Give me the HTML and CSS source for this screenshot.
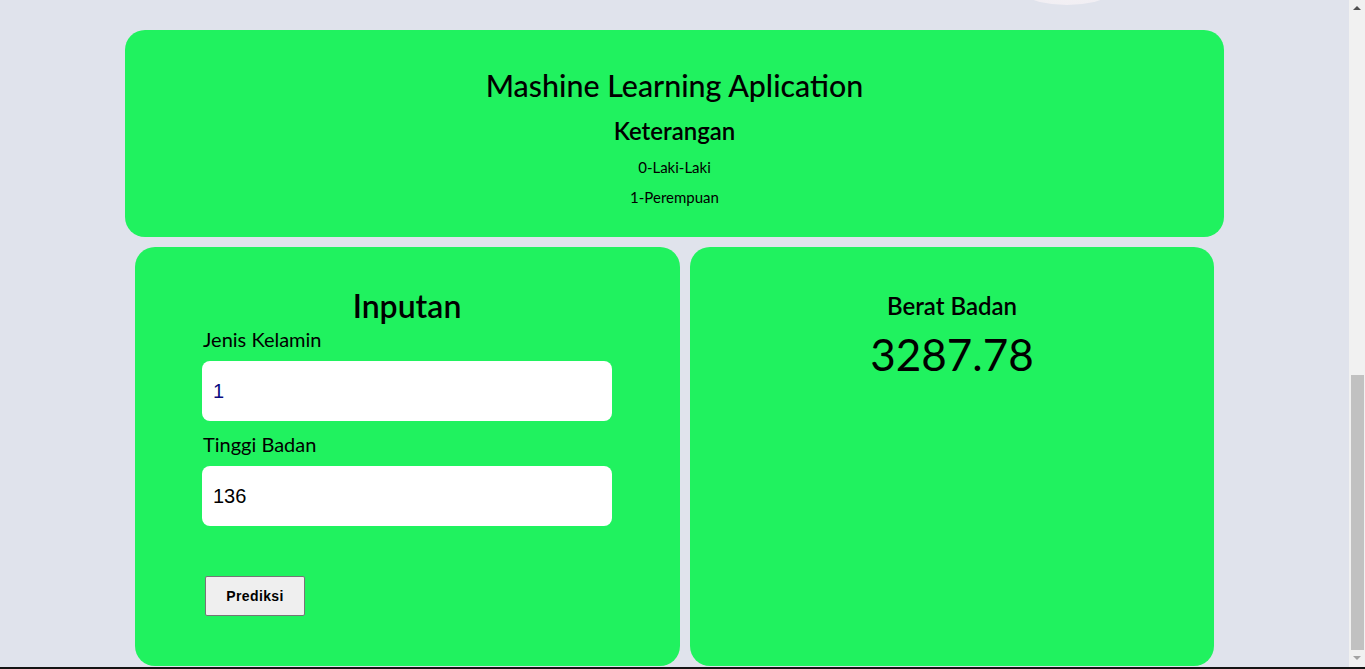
FILE: index.html
```html
<!DOCTYPE html>
<html lang="id">
<head>
<meta charset="utf-8">
<title>Mashine Learning Aplication</title>
<link rel="stylesheet" href="styles.css">
</head>
<body>
<div class="screen">
  <main class="page">
    <div class="blob"></div>
    <section class="card header">
      <h1 class="title">Mashine Learning Aplication</h1>
      <h2 class="subtitle">Keterangan</h2>
      <p class="note">0-Laki-Laki</p>
      <p class="note">1-Perempuan</p>
    </section>
    <div class="row">
      <section class="card form-card">
        <form class="form">
          <h2 class="form-title">Inputan</h2>
          <label class="label">Jenis Kelamin</label>
          <input class="field field-blue" type="text" value="1">
          <label class="label">Tinggi Badan</label>
          <input class="field" type="text" value="136">
          <button class="btn" type="button">Prediksi</button>
        </form>
      </section>
      <section class="card result-card">
        <h2 class="result-title">Berat Badan</h2>
        <div class="result-value">3287.78</div>
      </section>
    </div>
  </main>
  <aside class="scrollbar">
    <div class="arrow arrow-up"></div>
    <div class="track"><div class="thumb"></div></div>
    <div class="arrow arrow-down"></div>
  </aside>
</div>
<div class="taskbar"></div>
</body>
</html>
```
FILE: styles.css
```css
* { box-sizing: border-box; }
html, body { margin: 0; padding: 0; height: 669px; overflow: hidden; }
body {
  font-family: "Lato", "Noto Sans", sans-serif;
  background: #e0e3ec;
  color: #000;
}
.screen { display: flex; height: 667px; }
.page {
  position: relative;
  width: 1349px;
  flex: 0 0 1349px;
  padding-top: 30px;
}
.blob {
  position: absolute;
  left: 1000px;
  top: -70px;
  width: 134px;
  height: 75px;
  border-radius: 50%;
  background: radial-gradient(ellipse at 50% 60%, #f6f4f6 0%, #efecf2 70%, #e6e6ee 100%);
}
.card {
  background: #20f25f;
  border-radius: 20px;
}
.header {
  margin: 0 125px;
  height: 207px;
  padding-top: 35px;
  text-align: center;
}
.title {
  margin: 0;
  font-size: 30.4px;
  line-height: 40px;
  font-weight: 500;
}
.subtitle {
  margin: 11px 0 0;
  font-size: 24px;
  line-height: 30px;
  font-weight: 600;
}
.note {
  margin: 11px 0 0;
  font-size: 15px;
  line-height: 20px;
}
.note + .note { margin-top: 10px; }
.row {
  display: flex;
  gap: 10px;
  margin: 10px 135px 0;
  height: 419px;
}
.form-card { flex: 0 0 545px; padding: 39px 0 0 67px; }
.result-card { flex: 1; padding-top: 44px; text-align: center; }
.form {
  width: 410px;
  display: flex;
  flex-direction: column;
  align-items: flex-start;
}
.form-title {
  align-self: stretch;
  text-align: center;
  margin: 0;
  font-size: 32px;
  line-height: 40px;
  font-weight: 600;
}
.label {
  display: block;
  margin: 1px 0 10px 1px;
  font-size: 20px;
  line-height: 24px;
}
.field + .label { margin-top: 11px; }
.field {
  width: 410px;
  height: 60px;
  border: none;
  border-radius: 8px;
  background: #fff;
  padding: 0 11px;
  font-family: "Liberation Sans", Arial, sans-serif;
  font-size: 20px;
  color: #000;
  outline: none;
}
.field-blue { color: #0b0b80; }
.btn {
  margin: 50px 0 0 3px;
  width: 100px;
  height: 40px;
  background: #efefef;
  border: 1px solid #767676;
  border-radius: 2px;
  font-family: "Liberation Sans", Arial, sans-serif;
  font-weight: 700;
  font-size: 14px;
  letter-spacing: 0.4px;
  color: #000;
}
.result-title {
  margin: 0;
  font-size: 24px;
  line-height: 30px;
  font-weight: 600;
}
.result-value {
  margin-top: 5px;
  font-size: 44px;
  line-height: 56px;
}
.scrollbar {
  flex: 0 0 16px;
  background: #f1f1f1;
  display: flex;
  flex-direction: column;
  align-items: center;
}
.arrow { width: 16px; height: 17px; position: relative; }
.arrow::after {
  content: "";
  position: absolute;
  left: 4px;
  width: 0; height: 0;
  border-left: 4px solid transparent;
  border-right: 4px solid transparent;
}
.arrow-up::after { top: 6px; border-bottom: 4px solid #505050; }
.arrow-down::after { top: 6px; border-top: 4px solid #a3a3a3; }
.track { flex: 1; width: 16px; padding: 358px 1px 0 2px; }
.thumb { height: 275px; background: #c1c1c1; }
.taskbar { height: 2px; background: #141414; }
```
